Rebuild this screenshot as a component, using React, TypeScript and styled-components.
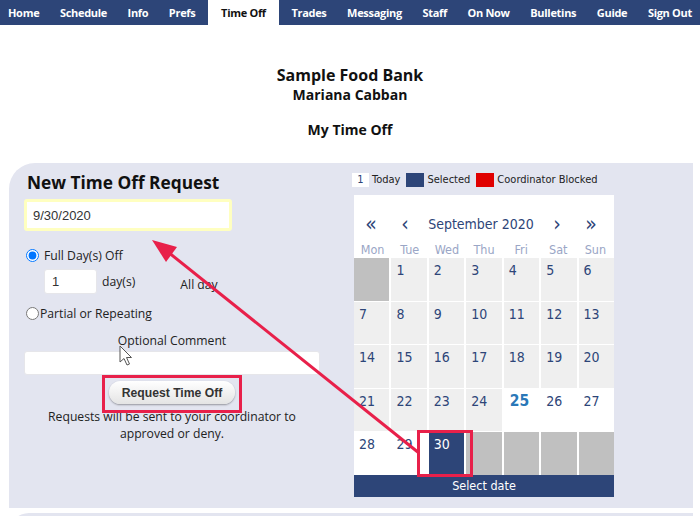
import React from 'react'
import styled, { createGlobalStyle } from 'styled-components'

const NAVY = '#2d4578'
const PANEL = '#e3e5f0'
const MARK = '#e8204a'

const GlobalStyle = createGlobalStyle`
  html, body {
    margin: 0;
    padding: 0;
    background: #ffffff;
  }
  body {
    font-family: "Open Sans", "Noto Sans", sans-serif;
    color: #111;
  }
`

const NAV = ['Home', 'Schedule', 'Info', 'Prefs', 'Time Off', 'Trades', 'Messaging', 'Staff', 'On Now', 'Bulletins', 'Guide', 'Sign Out']

type Day = { n: number | null; kind: 'empty' | 'past' | 'open' | 'today' | 'selected' }

const dayKind = (n: number | null): Day['kind'] => {
  if (n === null) return 'empty'
  if (n === 30) return 'selected'
  if (n === 25) return 'today'
  if (n < 25) return 'past'
  return 'open'
}

const WEEKS: (number | null)[][] = [
  [null, 1, 2, 3, 4, 5, 6],
  [7, 8, 9, 10, 11, 12, 13],
  [14, 15, 16, 17, 18, 19, 20],
  [21, 22, 23, 24, 25, 26, 27],
  [28, 29, 30, null, null, null, null],
]

export default function App() {
  return (
    <Page>
      <GlobalStyle />
      <NavBar>
        {NAV.map((item) => (
          <NavItem key={item} $active={item === 'Time Off'}>{item}</NavItem>
        ))}
      </NavBar>

      <Header>
        <OrgName>Sample Food Bank</OrgName>
        <UserName>Mariana Cabban</UserName>
        <PageTitle>My Time Off</PageTitle>
      </Header>

      <Panel>
        <LeftCol>
          <FormTitle>New Time Off Request</FormTitle>
          <DateBox>9/30/2020</DateBox>
          <RadioRow>
            <Radio type="radio" name="kind" defaultChecked />
            <RadioLabel>Full Day(s) Off</RadioLabel>
          </RadioRow>
          <DaysRow>
            <NumBox>1</NumBox>
            <DaysLabel>day(s)</DaysLabel>
            <AllDay>All day</AllDay>
          </DaysRow>
          <RadioRow $tight>
            <Radio type="radio" name="kind" />
            <RadioLabel $tight>Partial or Repeating</RadioLabel>
          </RadioRow>
          <CommentLabel>Optional Comment</CommentLabel>
          <CommentBox />
          <RequestButton>Request Time Off</RequestButton>
          <Note>Requests will be sent to your coordinator to<br />approved or deny.</Note>
        </LeftCol>

        <RightCol>
          <Legend>
            <TodayKey>1</TodayKey>
            <LegendText>Today</LegendText>
            <Swatch $color={NAVY} />
            <LegendText>Selected</LegendText>
            <Swatch $color="#e00000" />
            <LegendText>Coordinator Blocked</LegendText>
          </Legend>

          <Calendar>
            <MonthRow>
              <Arrow>«</Arrow>
              <Arrow>‹</Arrow>
              <Month>September 2020</Month>
              <Arrow>›</Arrow>
              <Arrow>»</Arrow>
            </MonthRow>
            <DayNames>
              {['Mon', 'Tue', 'Wed', 'Thu', 'Fri', 'Sat', 'Sun'].map((d) => (
                <DayName key={d}>{d}</DayName>
              ))}
            </DayNames>
            <Grid>
              {WEEKS.flat().map((n, i) => (
                <Cell key={i} $kind={dayKind(n)}>{n}</Cell>
              ))}
            </Grid>
            <SelectBar>Select date</SelectBar>
          </Calendar>
        </RightCol>
      </Panel>
      <NextPanel />

      <Marks viewBox="0 0 700 516" width="700" height="516">
        <rect x="103.5" y="376.5" width="137" height="35" fill="none" stroke={MARK} strokeWidth="3" />
        <rect x="418.5" y="431.5" width="53" height="44" fill="none" stroke={MARK} strokeWidth="3" />
        <line x1="419" y1="453" x2="168" y2="252" stroke={MARK} strokeWidth="3" />
        <polygon points="152,240 177,247 166,262" fill={MARK} />
        <path
          d="M120 346 L120 362 L124 358.5 L127 365 L129.5 364 L126.5 357.5 L131.5 357.5 Z"
          fill="#fff"
          stroke="#555"
          strokeWidth="1"
          strokeLinejoin="round"
        />
      </Marks>
    </Page>
  )
}

const Page = styled.div`
  position: relative;
  width: 700px;
  height: 516px;
  overflow: hidden;
`

const NavBar = styled.nav`
  display: flex;
  justify-content: space-between;
  height: 25px;
  background: ${NAVY};
`

const NavItem = styled.div<{ $active?: boolean }>`
  display: flex;
  align-items: center;
  padding: 0 ${(p) => (p.$active ? '13px' : '8px')};
  font-size: 11px;
  font-weight: 700;
  letter-spacing: -0.3px;
  color: ${(p) => (p.$active ? '#111' : '#fff')};
  background: ${(p) => (p.$active ? '#fff' : 'transparent')};
  white-space: nowrap;
`

const Header = styled.header`
  display: flex;
  flex-direction: column;
  align-items: center;
  padding-top: 40px;
`

const OrgName = styled.div`
  font-size: 16px;
  font-weight: 700;
  line-height: 20px;
`

const UserName = styled.div`
  font-size: 14px;
  font-weight: 700;
  line-height: 20px;
`

const PageTitle = styled.div`
  margin-top: 15px;
  font-size: 14px;
  font-weight: 700;
  line-height: 20px;
`

const Panel = styled.section`
  display: grid;
  grid-template-columns: 334px 1fr;
  margin: 23px 7px 0 9px;
  height: 345px;
  background: ${PANEL};
  border-top-left-radius: 26px;
`

const NextPanel = styled.div`
  margin: 5px 7px 0 9px;
  height: 20px;
  background: ${PANEL};
  border-top-left-radius: 26px;
`

const LeftCol = styled.div`
  display: flex;
  flex-direction: column;
  padding: 8px 23px 0 15px;
`

const FormTitle = styled.h2`
  margin: 0 0 0 3px;
  font-size: 17.3px;
  line-height: 24px;
  font-weight: 700;
`

const DateBox = styled.div`
  margin-top: 4px;
  width: 208px;
  height: 32px;
  box-sizing: border-box;
  border: 3px solid #ffffc0;
  border-radius: 3px;
  background: #fff;
  padding-left: 6px;
  display: flex;
  align-items: center;
  font-family: "Liberation Sans", Arial, sans-serif;
  font-size: 13px;
  color: #333;
`

const RadioRow = styled.label<{ $tight?: boolean }>`
  display: flex;
  align-items: center;
  height: 18px;
  margin-top: ${(p) => (p.$tight ? '10px' : '15px')};
`

const Radio = styled.input`
  margin: 0 0 0 2px;
  width: 13px;
  height: 13px;
`

const RadioLabel = styled.span<{ $tight?: boolean }>`
  margin-left: ${(p) => (p.$tight ? '1px' : '5px')};
  font-size: 12.2px;
  color: #222;
`

const DaysRow = styled.div`
  display: flex;
  align-items: center;
  margin: 5px 0 0 20px;
  height: 25px;
`

const NumBox = styled.div`
  width: 53px;
  height: 25px;
  box-sizing: border-box;
  padding-left: 7px;
  display: flex;
  align-items: center;
  background: #fff;
  border: 1px solid #e6e6ea;
  border-radius: 3px;
  font-family: "Liberation Sans", Arial, sans-serif;
  font-size: 13px;
  color: #333;
`

const DaysLabel = styled.span`
  margin-left: 5px;
  font-size: 12.2px;
  color: #222;
`

const AllDay = styled.span`
  margin: 5px 0 0 45px;
  font-size: 12.2px;
  color: #222;
`

const CommentLabel = styled.div`
  margin-top: 10px;
  text-align: center;
  font-size: 12.2px;
  line-height: 18px;
  color: #222;
`

const CommentBox = styled.div`
  margin-top: 1px;
  height: 24px;
  background: #fff;
  border: 1px solid #e6e6ea;
  border-radius: 3px;
  box-sizing: border-box;
`

const RequestButton = styled.button`
  align-self: center;
  margin-top: 6px;
  width: 126px;
  height: 23px;
  border: none;
  border-radius: 12px;
  background: linear-gradient(#ffffff, #e4e4e4);
  box-shadow: 0 1px 2px rgba(0, 0, 0, 0.35);
  font-family: "Liberation Sans", Arial, sans-serif;
  font-size: 12.2px;
  font-weight: 700;
  color: #333;
  padding: 0;
`

const Note = styled.p`
  margin: 4px 0 0;
  text-align: center;
  font-size: 12.2px;
  line-height: 17px;
  color: #222;
`

const RightCol = styled.div`
  padding: 9px 0 0 9px;
  font-family: "DejaVu Sans Condensed", "Liberation Sans", sans-serif;
`

const Legend = styled.div`
  display: flex;
  align-items: center;
  height: 15px;
  font-size: 11px;
  color: #222;
`

const TodayKey = styled.span`
  width: 17px;
  height: 14px;
  background: #fff;
  color: ${NAVY};
  display: flex;
  align-items: center;
  justify-content: center;
  font-size: 11px;
`

const Swatch = styled.span<{ $color: string }>`
  width: 18px;
  height: 14px;
  margin-left: 6px;
  background: ${(p) => p.$color};
`

const LegendText = styled.span`
  margin-left: 3px;
`

const Calendar = styled.div`
  margin: 8px 0 0 2px;
  width: 260px;
  background: #fff;
`

const MonthRow = styled.div`
  display: flex;
  align-items: center;
  justify-content: space-around;
  padding: 17px 6px 0 0;
  margin-bottom: 4px;
  height: 24px;
  color: ${NAVY};
`

const Arrow = styled.span`
  font-size: 21px;
  line-height: 24px;
  width: 22px;
  text-align: center;
`

const Month = styled.span`
  font-size: 14px;
  line-height: 24px;
`

const DayNames = styled.div`
  display: grid;
  grid-template-columns: repeat(7, 1fr);
  height: 18px;
  align-items: center;
`

const DayName = styled.span`
  text-align: center;
  font-size: 12.5px;
  color: #9aa6c6;
`

const CELL_BG: Record<Day['kind'], string> = {
  empty: '#c0c0c0',
  past: '#efefef',
  open: '#ffffff',
  today: '#ffffff',
  selected: NAVY,
}

const Grid = styled.div`
  display: grid;
  grid-template-columns: repeat(7, 1fr);
  grid-auto-rows: 42.5px;
  gap: 1px 2px;
  background: #fff;
`

const Cell = styled.div<{ $kind: Day['kind'] }>`
  background: ${(p) => CELL_BG[p.$kind]};
  padding: 3px 0 0 ${(p) => (p.$kind === 'today' ? '6px' : '5px')};
  font-size: ${(p) => (p.$kind === 'today' ? '15.5px' : '14px')};
  font-weight: ${(p) => (p.$kind === 'today' ? 700 : 400)};
  color: ${(p) => (p.$kind === 'selected' ? '#fff' : p.$kind === 'today' ? '#2a78b8' : NAVY)};
  line-height: 18px;
`

const SelectBar = styled.div`
  height: 22px;
  background: ${NAVY};
  color: #fff;
  font-size: 12.5px;
  display: flex;
  align-items: center;
  justify-content: center;
`

const Marks = styled.svg`
  position: absolute;
  top: 0;
  left: 0;
  pointer-events: none;
`
